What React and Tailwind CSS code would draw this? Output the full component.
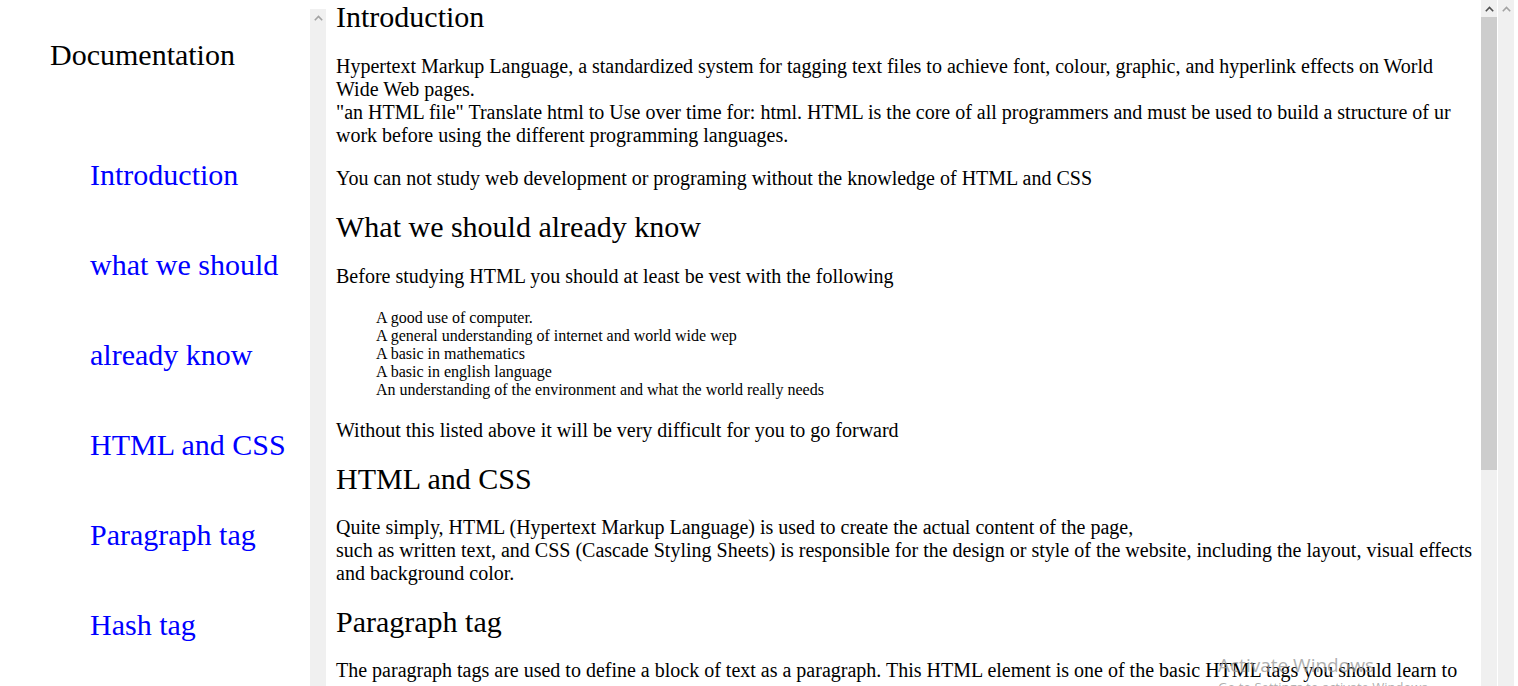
import React from "react";

const Arrow = ({ dark = false }) => (
  <div className="flex h-[17px] items-center justify-center">
    <svg width="9" height="6" viewBox="0 0 9 6">
      <path d="M0.8 5.2 L4.5 1.5 L8.2 5.2" fill="none" stroke={dark ? "#505050" : "#a3a3a3"} strokeWidth="1.6" />
    </svg>
  </div>
);

const links = ["Introduction", "what we should already know", "HTML and CSS", "Paragraph tag", "Hash tag"];

const list = [
  "A good use of computer.",
  "A general understanding of internet and world wide wep",
  "A basic in mathematics",
  "A basic in english language",
  "An understanding of the environment and what the world really needs",
];

export default function App() {
  return (
    <div className="relative flex h-[686px] overflow-hidden bg-white text-black font-['Liberation_Serif',serif]">
      {/* Side nav */}
      <nav className="w-[310px] shrink-0 pt-[10px]">
        <h1 className="pl-[50px] text-[30px] leading-[90px] font-normal">Documentation</h1>
        <ul className="mt-[30px] pl-[90px]">
          {links.map((l) => (
            <li key={l} className="text-[30px] leading-[90px]">
              <a href="#" className="text-[#0000ff]">{l}</a>
            </li>
          ))}
        </ul>
      </nav>

      {/* Nav scrollbar */}
      <div className="mt-[9px] w-[16px] shrink-0 bg-[#f0f0f0]">
        <Arrow />
      </div>

      {/* Main content */}
      <main className="flex-1 overflow-hidden pl-[10px] pr-[8px] text-[20px] leading-[23px]">
        <h2 className="text-[30px] leading-[34px]">Introduction</h2>
        <p className="mt-[20.5px]">
          Hypertext Markup Language, a standardized system for tagging text files to achieve font, colour, graphic, and hyperlink effects on World Wide Web pages.
          <br />
          "an HTML file" Translate html to Use over time for: html. HTML is the core of all programmers and must be used to build a structure of ur work before using the different programming languages.
        </p>
        <p className="mt-[20.5px]">You can not study web development or programing without the knowledge of HTML and CSS</p>

        <h2 className="mt-[20px] text-[30px] leading-[34px]">What we should already know</h2>
        <p className="mt-[20.5px]">Before studying HTML you should at least be vest with the following</p>
        <ul className="mt-[21px] pl-[40px] text-[16px] leading-[18px]">
          {list.map((t) => (
            <li key={t}>{t}</li>
          ))}
        </ul>
        <p className="mt-[20px]">Without this listed above it will be very difficult for you to go forward</p>

        <h2 className="mt-[20px] text-[30px] leading-[34px]">HTML and CSS</h2>
        <p className="mt-[20px]">
          Quite simply, HTML (Hypertext Markup Language) is used to create the actual content of the page,
          <br />
          such as written text, and CSS (Cascade Styling Sheets) is responsible for the design or style of the website, including the layout, visual effects and background color.
        </p>

        <h2 className="mt-[20px] text-[30px] leading-[34px]">Paragraph tag</h2>
        <p className="mt-[20.5px]">
          The paragraph tags are used to define a block of text as a paragraph. This HTML element is one of the basic HTML tags you should learn to use when building a website.
        </p>
      </main>

      {/* Main scrollbar */}
      <div className="flex w-[16px] shrink-0 flex-col bg-[#f0f0f0]">
        <Arrow dark />
        <div className="h-[453px] bg-[#cdcdcd]" />
      </div>
      <div className="w-px shrink-0" />
      {/* Page scrollbar */}
      <div className="w-[16px] shrink-0 bg-[#f0f0f0]">
        <Arrow />
      </div>
      <div className="w-[4px] shrink-0" />

      {/* Windows watermark */}
      <div className="pointer-events-none absolute left-[1218px] top-[652px] font-['Open_Sans',sans-serif] text-[#9a9a9a]/80">
        <div className="text-[19px] leading-[26px]">Activate Windows</div>
        <div className="text-[13px] leading-[18px]">Go to Settings to activate Windows.</div>
      </div>
    </div>
  );
}
